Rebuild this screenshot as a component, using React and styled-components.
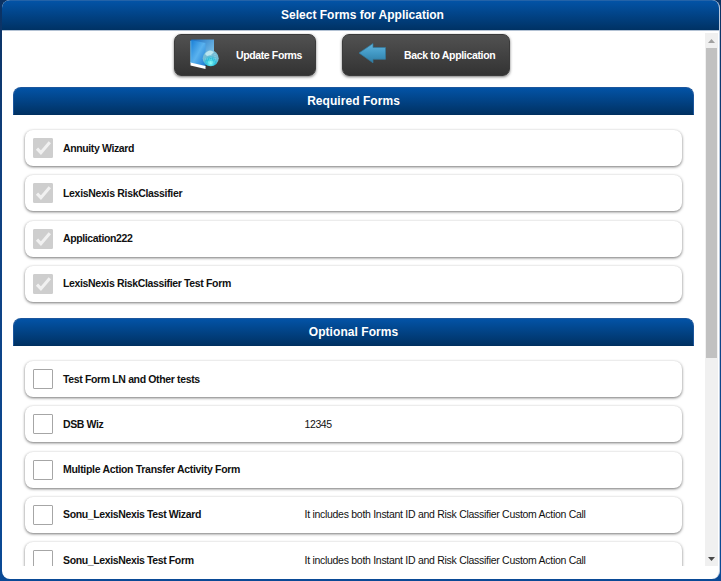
import React from "react";
import styled, { createGlobalStyle } from "styled-components";

const GlobalStyle = createGlobalStyle`
  * { box-sizing: border-box; }
  html, body { margin: 0; overflow: hidden; }
  body { font-family: "Liberation Sans", Arial, sans-serif; color: #111; }
`;

const Backdrop = styled.div`
  width: 721px;
  height: 581px;
  padding: 0 1px 2px 2px;
  background: linear-gradient(#0b3263, #10407f 30%, #0a4a96);
`;

const Dialog = styled.main`
  height: 579px;
  display: flex;
  flex-direction: column;
  overflow: hidden;
  background: #fff;
  border-radius: 8px;
  border-right: 1px solid #b9c9de;
`;

const TitleBar = styled.header`
  flex: none;
  height: 30px;
  display: flex;
  align-items: center;
  justify-content: center;
  padding-bottom: 1px;
  border-top: 1px solid #2463a8;
  background: linear-gradient(#0353a6, #003264);
  box-shadow: 0 1px 0 #b3c2d4;
  color: #fff;
`;

const Title = styled.h1`
  margin: 0 0 0 4px;
  font-size: 12px;
  line-height: 16px;
  white-space: nowrap;
`;

const Viewport = styled.div`
  height: 533px;
  margin-top: 3px;
  display: flex;
  overflow: hidden;
`;

const Content = styled.div`
  width: 681px;
  flex: none;
  margin: 0 11px;
`;

const Toolbar = styled.div`
  display: flex;
  gap: 26px;
  height: 54px;
  padding: 1px 0 0 161px;
`;

const ToolButton = styled.button`
  display: flex;
  align-items: center;
  width: ${(p) => p.$width}px;
  height: 42px;
  padding: 0 0 0 15px;
  border: 1px solid #3b3b3b;
  border-radius: 7px;
  background: linear-gradient(#515151, #333);
  box-shadow: 0 1px 3px rgba(0, 0, 0, 0.55);
  color: #fff;
  font: bold 10.5px/14px "Liberation Sans", Arial, sans-serif;
  letter-spacing: ${(p) => p.$track}px;
  white-space: nowrap;

  svg { flex: none; margin: -2px 16px 0 0; }
`;

const Section = styled.section`
  height: 231px;
`;

const SectionHeader = styled.h2`
  height: 28px;
  margin: 0;
  display: flex;
  align-items: center;
  justify-content: center;
  border: 1px solid #1c569c;
  border-bottom-color: #003060;
  border-radius: 8px 8px 0 0;
  background: linear-gradient(#0353a6, #003264);
  color: #fff;
  font-size: 12px;
  letter-spacing: 0.05px;
`;

const FormList = styled.ul`
  display: grid;
  gap: 9.25px;
  margin: 0;
  padding: 15px 12px 0;
  list-style: none;
`;

const FormRow = styled.li`
  display: grid;
  grid-template-columns: 20px 231.5px 1fr;
  column-gap: 10px;
  align-items: center;
  height: 36px;
  padding-left: 8px;
  border-radius: 8px;
  background: #fff;
  box-shadow: 0 1px 3px rgba(0, 0, 0, 0.55);
  font-size: 10.5px;
  line-height: 14px;
  white-space: nowrap;
`;

const Box = styled.span`
  display: grid;
  place-items: center;
  width: 20px;
  height: 20px;
  border: 1px solid ${(p) => (p.$locked ? "#cecece" : "#a6a6a6")};
  border-radius: 1px;
  background: ${(p) => (p.$locked ? "#cecece" : "#fff")};
`;

const Name = styled.strong`
  letter-spacing: ${(p) => p.$track}px;
  color: #111;
  margin-bottom: 1px;
`;

const Note = styled.span`
  letter-spacing: ${(p) => p.$track || 0}px;
  margin-bottom: 1px;
`;

const ScrollTrack = styled.div`
  display: flex;
  flex-direction: column;
  align-items: center;
  width: 13px;
  height: 533px;
  background: #f0f0f0;
`;

const ScrollThumb = styled.div`
  width: 11px;
  height: 310px;
  margin-bottom: auto;
  background: #c1c1c1;
`;

const ArrowSlot = styled.div`
  display: grid;
  place-items: center;
  width: 13px;
  height: 15px;
`;

function Check() {
  return (
    <svg width="18" height="18" viewBox="0 0 18 18" fill="none">
      <path d="M3 9.7 6.9 13.7 15.8 3.3" stroke="#f1f1f1" strokeWidth="3.1" />
    </svg>
  );
}

function FolderGlobe() {
  return (
    <svg width="30" height="32" viewBox="0 0 30 32">
      <defs>
        <linearGradient id="back" x1="0" x2="1" y2="1">
          <stop stopColor="#176cc2" />
          <stop offset="1" stopColor="#9bdcf5" />
        </linearGradient>
        <linearGradient id="cover" x1="0" x2="1" y2="1">
          <stop stopColor="#167cd5" />
          <stop offset=".5" stopColor="#5ab2ee" />
          <stop offset="1" stopColor="#1678d1" />
        </linearGradient>
        <radialGradient id="globe" cx=".5" cy=".8">
          <stop stopColor="#8bfff8" />
          <stop offset=".55" stopColor="#27bddb" />
          <stop offset="1" stopColor="#77bcd4" />
        </radialGradient>
      </defs>
      <path d="M1 1.5H24V25L16 27Z" fill="url(#back)" />
      <path d="M.5 2 15.5 5V29L.5 25Z" fill="url(#cover)" />
      <path d="M.8 3V25" stroke="#70bce9" strokeWidth=".8" />
      <path d="M.5 24.5 15.5 28V31L.5 27.5Z" fill="#fff" />
      <circle cx="20.7" cy="20.3" r="8" fill="url(#globe)" />
      <path d="M15 16q4-6 9-2l-3 3-4 1Z" fill="#e1faff" opacity=".65" />
      <path d="M15 21h12M16 24h10M21 15v12M25 16v8" stroke="#bafff8" strokeWidth=".6" strokeDasharray="1 1" opacity=".6" />
    </svg>
  );
}

function BackArrow() {
  return (
    <svg width="30" height="24" viewBox="0 0 30 24">
      <defs>
        <linearGradient id="arrow" x2="0" y2="1">
          <stop stopColor="#62b4dc" />
          <stop offset=".5" stopColor="#4299c5" />
          <stop offset="1" stopColor="#2f7da5" />
        </linearGradient>
      </defs>
      <path d="M1 11 15 1.5V5.5H27.5V17.3H15V20.8Z" fill="url(#arrow)" stroke="#32799c" strokeWidth=".7" />
    </svg>
  );
}

const requiredForms = [
  { name: "Annuity Wizard", track: -0.38 },
  { name: "LexisNexis RiskClassifier", track: -0.32 },
  { name: "Application222", track: -0.38 },
  { name: "LexisNexis RiskClassifier Test Form", track: -0.35 },
];

const customCall = "It includes both Instant ID and Risk Classifier Custom Action Call";
const optionalForms = [
  { name: "Test Form LN and Other tests", track: -0.36 },
  { name: "DSB Wiz", track: -0.4, note: "12345", noteTrack: -0.4 },
  { name: "Multiple Action Transfer Activity Form", track: -0.31 },
  { name: "Sonu_LexisNexis Test Wizard", track: -0.37, note: customCall, noteTrack: -0.285 },
  { name: "Sonu_LexisNexis Test Form", track: -0.37, note: customCall, noteTrack: -0.285 },
];

function FormSection({ title, forms, locked }) {
  return (
    <Section>
      <SectionHeader>{title}</SectionHeader>
      <FormList>
        {forms.map((form) => (
          <FormRow key={form.name}>
            <Box $locked={locked}>{locked && <Check />}</Box>
            <Name $track={form.track}>{form.name}</Name>
            <Note $track={form.noteTrack}>{form.note}</Note>
          </FormRow>
        ))}
      </FormList>
    </Section>
  );
}

export default function App() {
  return (
    <>
      <GlobalStyle />
      <Backdrop>
        <Dialog>
          <TitleBar><Title>Select Forms for Application</Title></TitleBar>
          <Viewport>
            <Content>
              <Toolbar>
                <ToolButton $width={142} $track={-0.38}><FolderGlobe />Update Forms</ToolButton>
                <ToolButton $width={168} $track={-0.33}><BackArrow />Back to Application</ToolButton>
              </Toolbar>
              <FormSection title="Required Forms" forms={requiredForms} locked />
              <FormSection title="Optional Forms" forms={optionalForms} />
            </Content>
            <ScrollTrack>
              <ArrowSlot>
                <svg width="7" height="4" viewBox="0 0 7 4"><path d="M0 4 3.5 0 7 4Z" fill="#a0a0a0" /></svg>
              </ArrowSlot>
              <ScrollThumb />
              <ArrowSlot>
                <svg width="7" height="4" viewBox="0 0 7 4"><path d="M0 0H7L3.5 4Z" fill="#484848" /></svg>
              </ArrowSlot>
            </ScrollTrack>
          </Viewport>
        </Dialog>
      </Backdrop>
    </>
  );
}
